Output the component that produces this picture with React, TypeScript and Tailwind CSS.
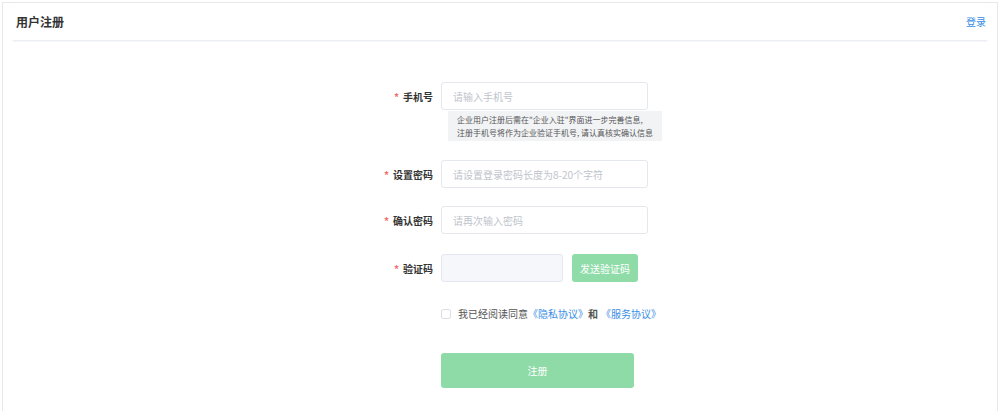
import React, { useState } from 'react'

const font = { fontFamily: '"Noto Sans CJK SC", "Noto Sans", sans-serif' }

const Label = ({ text }: { text: string }) => (
    <label className="w-[80px] shrink-0 pr-[8px] text-right text-[10px] font-bold text-[#333]">
        <span className="mr-[4px] text-[#f56c6c]">*</span>
        {text}
    </label>
)

const Field = ({ label, placeholder, type = "text" }: { label: string, placeholder: string, type?: string }) => (
    <div className="flex items-center">
        <Label text={label} />
        <input
            type={type}
            placeholder={placeholder}
            className="h-[28px] w-[207px] rounded-[3px] border border-[#e4e7ed] bg-white px-[11px] text-[10px] text-[#333] outline-none placeholder:text-[#c0c4cc]"
        />
    </div>
)

export default function App() {
    const [agreed, setAgreed] = useState(false)

    return (
        <div className="h-[411px] w-[1000px] overflow-hidden bg-white p-[2px]" style={font}>
            <div className="h-[420px] border border-[#e8e8e8] bg-white">
                <div className="mx-[10px] flex h-[38px] items-center justify-between border-b border-[#ebeef5] px-[3px] shadow-[0_1px_1px_rgba(0,0,0,0.03)]">
                    <h1 className="text-[12px] font-bold text-[#333]">用户注册</h1>
                    <a className="mr-[-2px] text-[10px] text-[#3a8ee6]">登录</a>
                </div>

                <div className="ml-[358px] flex flex-col pt-[41px]">
                    <Field label="手机号" placeholder="请输入手机号" />
                    <div className="ml-[87px] mt-px w-fit whitespace-nowrap bg-[#f2f3f5] px-[9px] py-[2px] text-[8px] leading-[13px] text-[#555]">
                        企业用户注册后需在"企业入驻"界面进一步完善信息,<br />
                        注册手机号将作为企业验证手机号, 请认真核实确认信息
                    </div>

                    <div className="mt-[19px]">
                        <Field label="设置密码" placeholder="请设置登录密码长度为8-20个字符" type="password" />
                    </div>
                    <div className="mt-[18px]">
                        <Field label="确认密码" placeholder="请再次输入密码" type="password" />
                    </div>

                    <div className="mt-[20px] flex items-center">
                        <Label text="验证码" />
                        <input className="h-[28px] w-[122px] rounded-[3px] border border-[#e4e7ed] bg-[#f5f7fa] px-[11px] text-[10px] outline-none" />
                        <button className="ml-[9px] h-[28px] w-[66px] rounded-[3px] bg-[#8fdca9] text-[10px] text-white">
                            发送验证码
                        </button>
                    </div>

                    <div className="ml-[80px] mt-[24px] flex items-center text-[10px] text-[#555]">
                        <button
                            onClick={() => setAgreed(!agreed)}
                            className="h-[10px] w-[10px] rounded-[2px] border border-[#dcdfe6] bg-white"
                        />
                        <span className="ml-[7px]">我已经阅读同意</span>
                        <a className="text-[#3a8ee6]">《隐私协议》</a>
                        <span className="font-bold">和</span>
                        <a className="ml-[3px] text-[#3a8ee6]">《服务协议》</a>
                    </div>

                    <button className="ml-[80px] mt-[32px] h-[35px] w-[193px] rounded-[3px] bg-[#8edba7] text-[10px] text-white">
                        注册
                    </button>
                </div>
            </div>
        </div>
    )
}
